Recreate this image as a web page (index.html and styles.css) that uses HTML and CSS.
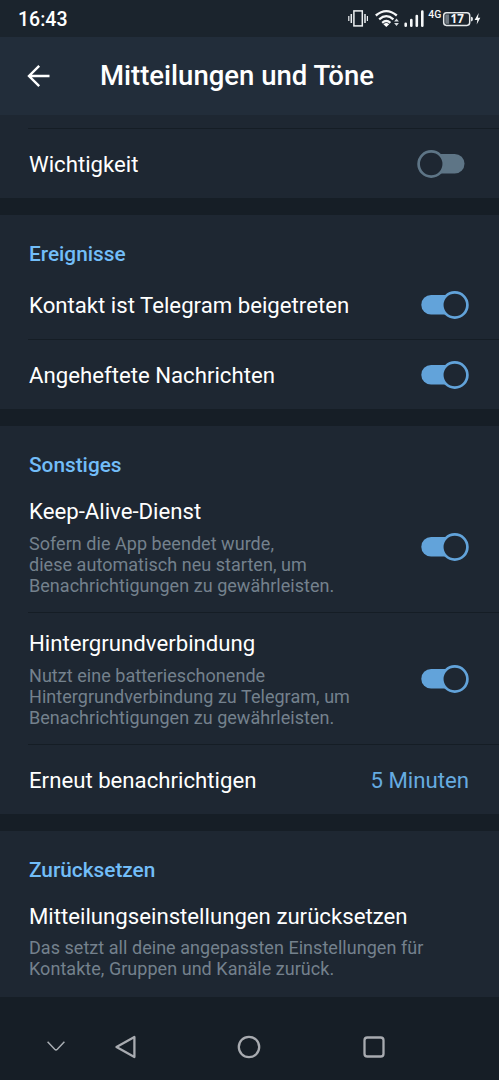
FILE: index.html
```
<!DOCTYPE html>
<html lang="de">
<head>
<meta charset="utf-8">
<title>Mitteilungen und Töne</title>
<link rel="stylesheet" href="styles.css">
</head>
<body>
<div class="screen">
  <div class="statusbar">
    <span class="clock">16:43</span>
    <svg class="status-icons" width="136" height="24" viewBox="0 0 136 24">
      <g fill="none" stroke="#eef1f3" stroke-width="1.5">
        <rect x="6.9" y="2.9" width="8.4" height="15"/>
        <path d="M4.3 6v9M18 6v9"/>
        <path d="M1.8 8v5M20.4 8v5" stroke-width="1.2"/>
      </g>
      <g fill="none" stroke="#f5f7f8" stroke-width="2.3">
        <path d="M28.8 7.5Q39.3-1.3 49.8 7.5"/>
        <path d="M32.2 11.3Q39.3 5 46.4 11.3"/>
        <path d="M35.2 14.8Q39.3 11.3 43.4 14.8"/>
      </g>
      <path d="M36.4 16.2Q39.3 14 42.2 16.2L39.3 19Z" fill="#fff"/>
      <path d="M47.1 13.6L49.5 10.6L51.9 13.6ZM47.1 15.1L49.5 18.1L51.9 15.1Z" fill="#d8dde1"/>
      <g stroke="#f5f7f8" stroke-width="2.6" stroke-linecap="round">
        <path d="M58.7 15.7v2M64.3 12v5.7M69.8 8v9.7M75.3 3.5v14.2"/>
      </g>
      <text class="network" x="81.3" y="9.8" textLength="13" lengthAdjust="spacingAndGlyphs">4G</text>
      <rect x="96.7" y="4.7" width="26" height="12.7" rx="2.8" fill="none" stroke="#e4e8ea" stroke-width="1.5"/>
      <rect x="98.3" y="6.4" width="3.8" height="9.4" fill="#717a82"/>
      <path d="M124 8.7q2 0 2 2.4t-2 2.4Z" fill="#e4e8ea"/>
      <text class="charge" x="110.2" y="15.1" text-anchor="middle">17</text>
      <path d="M131.7 5L127.6 12H130.3L129.7 16.5L133.3 9.8H130.9Z" fill="#f5f7f8"/>
    </svg>
  </div>
  <header class="header">
    <svg class="back" width="24" height="24" viewBox="0 0 24 24" fill="none" stroke="#fff" stroke-width="2.4">
      <path d="M23.5 12H3M13.2 1.8L3 12L13.2 22.2"/>
    </svg>
    <h1 class="title">Mitteilungen und Töne</h1>
  </header>
  <main>
    <section class="section section-first">
      <div class="row">
        <span class="label">Wichtigkeit</span>
        <svg class="toggle toggle-off" width="48" height="28" viewBox="0 0 48 28"><rect class="track" x="10" y="4" width="37.5" height="19.6" rx="9.8"/><circle class="thumb" cx="14.2" cy="14" r="12.6"/></svg>
      </div>
    </section>
    <section class="section">
      <h2 class="heading">Ereignisse</h2>
      <div class="row">
        <span class="label">Kontakt ist Telegram beigetreten</span>
        <svg class="toggle" width="48" height="28" viewBox="0 0 48 28"><rect class="track" x="0.3" y="4" width="37.5" height="19.6" rx="9.8"/><circle class="thumb" cx="33.8" cy="14" r="12.6"/></svg>
      </div>
      <div class="row divided">
        <span class="label">Angeheftete Nachrichten</span>
        <svg class="toggle" width="48" height="28" viewBox="0 0 48 28"><rect class="track" x="0.3" y="4" width="37.5" height="19.6" rx="9.8"/><circle class="thumb" cx="33.8" cy="14" r="12.6"/></svg>
      </div>
    </section>
    <section class="section">
      <h2 class="heading">Sonstiges</h2>
      <div class="row row-tall">
        <div class="copy">
          <span class="label">Keep-Alive-Dienst</span>
          <p class="description">Sofern die App beendet wurde,<br>diese automatisch neu starten, um<br>Benachrichtigungen zu gewährleisten.</p>
        </div>
        <svg class="toggle" width="48" height="28" viewBox="0 0 48 28"><rect class="track" x="0.3" y="4" width="37.5" height="19.6" rx="9.8"/><circle class="thumb" cx="33.8" cy="14" r="12.6"/></svg>
      </div>
      <div class="row row-tall divided">
        <div class="copy">
          <span class="label">Hintergrundverbindung</span>
          <p class="description">Nutzt eine batterieschonende<br>Hintergrundverbindung zu Telegram, um<br>Benachrichtigungen zu gewährleisten.</p>
        </div>
        <svg class="toggle" width="48" height="28" viewBox="0 0 48 28"><rect class="track" x="0.3" y="4" width="37.5" height="19.6" rx="9.8"/><circle class="thumb" cx="33.8" cy="14" r="12.6"/></svg>
      </div>
      <div class="row divided">
        <span class="label">Erneut benachrichtigen</span>
        <span class="value">5 Minuten</span>
      </div>
    </section>
    <section class="section">
      <h2 class="heading">Zurücksetzen</h2>
      <div class="row row-reset">
        <div class="copy">
          <span class="label">Mitteilungseinstellungen zurücksetzen</span>
          <p class="description">Das setzt all deine angepassten Einstellungen für<br>Kontakte, Gruppen und Kanäle zurück.</p>
        </div>
      </div>
    </section>
  </main>
  <nav class="navbar">
    <svg width="18" height="11" viewBox="0 0 18 11" fill="none" stroke="#a8adb2" stroke-width="1.5"><path d="M.6.8L7.7 8.3Q9 9.5 10.3 8.3L17.4.8"/></svg>
    <svg width="22" height="24" viewBox="0 0 22 24" fill="none" stroke="#a8abb0" stroke-width="2.3" stroke-linejoin="round"><path d="M19.4 2V22L1.5 12Z"/></svg>
    <svg width="24" height="24" viewBox="0 0 24 24" fill="none" stroke="#a8abb0" stroke-width="2.3"><circle cx="12" cy="12" r="10.2"/></svg>
    <svg width="22" height="22" viewBox="0 0 22 22" fill="none" stroke="#a8abb0" stroke-width="2.3"><rect x="1.5" y="1.5" width="19" height="19" rx="2.8"/></svg>
  </nav>
</div>
</body>
</html>
```
FILE: styles.css
```
* { box-sizing: border-box; }
body {
  margin: 0;
  background: #161e26;
  color: #fff;
  font-family: Roboto, "Liberation Sans", sans-serif;
}
svg { display: block; flex: none; }
.screen {
  width: 499px;
  height: 1080px;
  overflow: hidden;
  display: flex;
  flex-direction: column;
}
.statusbar {
  height: 37px;
  flex: none;
  display: flex;
  justify-content: space-between;
  align-items: center;
  padding: 0 16px 0 18px;
  background: #1b242d;
}
.clock {
  font-size: 19.5px;
  font-weight: 500;
  line-height: 24px;
  padding-top: 2px;
}
.status-icons { margin-top: 3px; }
.network { font-size: 10px; font-weight: 500; fill: #f5f7f8; }
.charge { font-family: "Open Sans", Roboto, sans-serif; font-size: 11.5px; font-weight: 700; fill: #f5f7f8; }
.header {
  height: 78px;
  flex: none;
  display: flex;
  align-items: center;
  padding-left: 26px;
  background: #222d3a;
}
.title {
  margin: 0 0 0 50px;
  font-size: 27.5px;
  font-weight: 500;
  line-height: 32px;
  white-space: nowrap;
}
.section {
  background: #1e2732;
  margin-bottom: 16.5px;
}
.section-first { padding-top: 13px; }
.heading {
  margin: 0;
  height: 55.5px;
  padding: 26px 29px 0;
  font-size: 20.8px;
  font-weight: 500;
  line-height: 26px;
  color: #72bdf8;
}
.row {
  height: 69px;
  display: flex;
  justify-content: space-between;
  align-items: center;
  margin-left: 28px;
  padding: 0 30px 0 1px;
}
.divided { border-top: 1px solid #151d25; height: 70px; }
.section-first .row { height: 70px; border-top: 1px solid #151d25; }
.row-tall { height: 131px; }
.row-tall.divided { height: 132px; }
.row-reset { height: 111px; }
.copy { align-self: flex-start; padding-top: 16.5px; }
.label {
  display: block;
  font-size: 22.2px;
  line-height: 26px;
  white-space: nowrap;
}
.description {
  margin: 9px 0 0;
  font-size: 18px;
  line-height: 21.2px;
  letter-spacing: 0.04px;
  color: #74818d;
  white-space: nowrap;
}
.row-reset .description { margin-top: 8px; }
.value { font-size: 22.2px; color: #66abe0; }
.track { fill: #62a3da; }
.thumb { fill: #1e2732; stroke: #62a3da; stroke-width: 2.7; }
.toggle-off { margin-right: 4px; }
.toggle-off .track { fill: #5e7586; }
.toggle-off .thumb { stroke: #5e7586; }
.navbar {
  flex: none;
  display: grid;
  grid-template-columns: 18px 22px 24px 22px;
  column-gap: 50px;
  align-items: center;
  height: 66px;
  padding-left: 47px;
}
.navbar {
  grid-template-columns: 18px 22px 24px 22px;
  column-gap: 0;
}
.navbar svg:nth-child(2) { margin-left: 50px; }
.navbar svg:nth-child(3) { margin-left: 150px; }
.navbar svg:nth-child(4) { margin-left: 252px; }
```
